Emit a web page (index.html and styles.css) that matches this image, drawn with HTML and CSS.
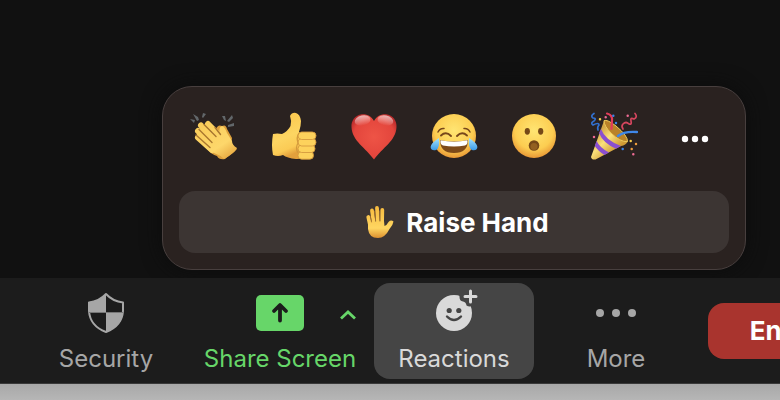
FILE: index.html
```html
<!DOCTYPE html>
<html lang="en">
<head>
<meta charset="utf-8">
<title>Meeting controls</title>
<link rel="stylesheet" href="styles.css">
</head>
<body>
<svg class="defs" aria-hidden="true">
  <defs>
    <linearGradient id="skin" x1="0" y1="0" x2="0.3" y2="1"><stop offset="0" stop-color="#fbc448"/><stop offset="0.6" stop-color="#fdd562"/><stop offset="0.85" stop-color="#fbcb55"/><stop offset="1" stop-color="#e3a03c"/></linearGradient>
    <linearGradient id="fingers" gradientUnits="userSpaceOnUse" x1="8" y1="8" x2="36" y2="48"><stop offset="0" stop-color="#f9cb58"/><stop offset="0.7" stop-color="#fdd76b"/><stop offset="1" stop-color="#e8aa42"/></linearGradient>
    <linearGradient id="palm" gradientUnits="userSpaceOnUse" x1="0" y1="0" x2="0" y2="33"><stop offset="0" stop-color="#f6b93d"/><stop offset="0.7" stop-color="#ffd661"/><stop offset="1" stop-color="#dc9030"/></linearGradient>
    <radialGradient id="face" cx="0.5" cy="0.38" r="0.66"><stop offset="0" stop-color="#ffe573"/><stop offset="0.65" stop-color="#fccd51"/><stop offset="1" stop-color="#e48d30"/></radialGradient>
    <radialGradient id="heart" cx="0.5" cy="0.5" r="0.6"><stop offset="0" stop-color="#ee5446"/><stop offset="0.75" stop-color="#e3453c"/><stop offset="1" stop-color="#b5292a"/></radialGradient>
    <linearGradient id="shine" x1="0" y1="0" x2="0" y2="1"><stop offset="0" stop-color="#fff" stop-opacity="0.65"/><stop offset="1" stop-color="#fff" stop-opacity="0"/></linearGradient>
    <linearGradient id="tear" x1="0" y1="0" x2="0" y2="1"><stop offset="0" stop-color="#a6e5ff"/><stop offset="1" stop-color="#3b9be8"/></linearGradient>
    <linearGradient id="cone" gradientUnits="userSpaceOnUse" x1="6" y1="22" x2="24" y2="40"><stop offset="0" stop-color="#d3a544"/><stop offset="0.45" stop-color="#fbe07a"/><stop offset="1" stop-color="#cf9a35"/></linearGradient>
  </defs>
</svg>

<main class="stage">
  <section class="popup" aria-label="Reactions">
    <div class="emoji-row">
      <button class="emoji" type="button" aria-label="Clap">
        <svg viewBox="0 0 48 48">
          <path fill="#62676a" d="M0 7l5 1-1 3zM3 2l5 3 1 3-2 1zM13 1l3 1-3 4-1-1zM32 4l3 0 1 5-2-1zM42 3l1 3-4 4-2-1zM44 11v3l-6 1v-2z"/>
          <path fill="#dda03c" d="M26 17Q28 12 32 14Q36 12 37 17L42 26Q41 32 43 34L47 37L35 47Q29 48 27 44Q20 42 15 34Z"/>
          <g fill="none" stroke="url(#fingers)" stroke-width="6" stroke-linecap="round">
            <path d="M18 12L33 27M11 13.500L28 31M8 19L26 36M8 25.500L22 38"/>
          </g>
          <path fill="url(#fingers)" d="M24 17L30 23Q28 15 32 14Q35 15 37 21L42 29Q42 33 47 36Q45 41 34 47Q30 43 24 41L14 33Z"/>
          <path fill="none" stroke="#a9772f" stroke-width="1.400" stroke-linecap="round" d="M14 12.500L26 24.500M9 17.500L22 30.500M6 23L20 35.500M25 15.500L30.500 22.500"/>
        </svg>
      </button>
      <button class="emoji" type="button" aria-label="Thumbs up">
        <svg viewBox="0 0 48 48">
          <path fill="url(#skin)" d="M3 22Q7 21 12 22Q18 19 20.500 14Q22 9 20 4Q22 0 26 1Q30 2 31 9Q31 14 29 20L34 29V43Q32 47.500 26 47Q17 46 13 43Q8 45 3 43Q1 33 3 22Z"/>
          <g fill="#fdd25c" stroke="#d59a3e" stroke-width="0.900">
            <rect x="28" y="39.500" width="15.500" height="7.700" rx="3.700"/>
            <rect x="28" y="33" width="17" height="7.500" rx="3.700"/>
            <rect x="28" y="26.500" width="18" height="7.500" rx="3.700"/>
            <rect x="28" y="20" width="18" height="7.500" rx="3.700"/>
          </g>
          <path fill="none" stroke="#d39a3c" stroke-width="1.200" d="M29 21Q26 25 28 31Q25 36 28 41"/>
        </svg>
      </button>
      <button class="emoji" type="button" aria-label="Heart">
        <svg viewBox="0 0 48 48">
          <path fill="url(#heart)" d="M24 9C27 3 33 2 36 2.300C43 3 47 9 46.500 15C46 29 32 36 24 47.500C16 36 2 29 1.500 15C1 9 5 3 12 2.300C15 2 21 3 24 9Z"/>
          <ellipse cx="12.500" cy="8.500" rx="8" ry="5" fill="url(#shine)" transform="rotate(-12 12.500 8)"/>
          <ellipse cx="35.500" cy="8.500" rx="8" ry="5" fill="url(#shine)" transform="rotate(12 35.500 8)"/>
        </svg>
      </button>
      <button class="emoji" type="button" aria-label="Tears of joy">
        <svg viewBox="0 0 48 48">
          <circle cx="24" cy="24" r="22" fill="url(#face)"/>
          <g fill="none" stroke="#77471b" stroke-linecap="round">
            <path stroke-width="1.500" d="M8 20Q10 16 14 16.500M40 20Q38 16 34 16.500"/>
            <path stroke-width="1.900" d="M11 23.500Q16 19 21 24M27 24Q32 19 37 23.500"/>
          </g>
          <path fill="#7d4a19" d="M10 28Q24 31 38 28Q38 41 24 41Q10 41 10 28Z"/>
          <path fill="#ffffff" d="M10.500 28.300Q24 31 37.500 28.300Q38 32.500 35 33.500Q24 35.500 13 33.500Q10 32.500 10.500 28.300Z"/>
          <path fill="url(#tear)" d="M9 26Q10 36 6 38Q1 39 .6 35Q1 31 9 26ZM39 26Q38 36 42 38Q47 39 47.400 35Q47 31 39 26Z"/>
        </svg>
      </button>
      <button class="emoji" type="button" aria-label="Surprised">
        <svg viewBox="0 0 48 48">
          <circle cx="24" cy="24" r="22" fill="url(#face)"/>
          <g fill="#754817">
            <ellipse cx="17.300" cy="19.300" rx="2.600" ry="3.400"/>
            <ellipse cx="30.700" cy="19.300" rx="2.600" ry="3.400"/>
            <ellipse cx="24" cy="33.500" rx="5.300" ry="5.300"/>
          </g>
          <ellipse cx="24" cy="34.500" rx="3.500" ry="3.500" fill="#936020"/>
        </svg>
      </button>
      <button class="emoji" type="button" aria-label="Celebrate">
        <svg viewBox="0 0 48 48">
          <path fill="url(#cone)" d="M14 8.700L37.500 29.700Q36 33 31 34L5.500 47.500Q1.500 48 1 45Z"/>
          <path fill="#8a4fd0" d="M11 17Q15 28 31 34L26 36.800Q13 31 9 21ZM6.500 29Q10 36 19 40.500L14.500 43Q8 39 4.800 34Z"/>
          <path fill="#b98229" stroke="#edcb5c" stroke-width="1" d="M14 8.700Q17 7 26 14Q38 24 37.500 29.700Q30 30 21 21Q14 14 14 8.700Z"/>
          <g fill="none" stroke-linecap="round">
            <path stroke="#e23b5a" stroke-width="2.200" d="M17 1.500Q23 3 22 9L21.500 17"/>
            <path stroke="#3f87e8" stroke-width="2.400" d="M28 24Q34 19 47 20"/>
            <path stroke="#3271d0" stroke-width="1.700" d="M4 1.500Q0 4 3 6Q7 6 4 9Q0 11 3 13Q9 10 9 13Q7 15 8 18"/>
            <path stroke="#d6465e" stroke-width="1.700" d="M45 1.500Q48 5 44 7Q40 5 41 9Q42 13 39 12Q36 9 33 12Q31 14 33 17"/>
          </g>
          <path fill="none" stroke-width="2.500" stroke-linecap="round" stroke="#f7cf4f" d="M10 7.300h0M40.700 29h0"/>
          <path fill="none" stroke-width="2.500" stroke-linecap="round" stroke="#ee6b93" d="M15.700 5.300h0M37.700 3.700h0M4 25h0M43.300 42.300h0"/>
          <path fill="none" stroke-width="2.500" stroke-linecap="round" stroke="#3c84e6" d="M23.300 3.700h0M26 11h0M32.700 37h0"/>
          <path fill="none" stroke-width="2.500" stroke-linecap="round" stroke="#ef9e3e" d="M46 32h0M41.700 37h0"/>
        </svg>
      </button>
      <button class="emoji" type="button" aria-label="More reactions">
        <svg viewBox="0 0 48 48" fill="#fff"><circle cx="15" cy="27" r="3.200"/><circle cx="25" cy="27" r="3.200"/><circle cx="35" cy="27" r="3.200"/></svg>
      </button>
    </div>
    <button class="raise" type="button">
      <svg class="hand" viewBox="0 0 28 34" aria-hidden="true">
        <path fill="none" stroke="url(#palm)" stroke-width="3.800" stroke-linecap="round" d="M2.300 12L4.500 22M6 5.500L8 20M11 3L12 20M16.300 5L16 20"/>
        <path fill="url(#palm)" d="M2 17L18 16L18.500 21Q21 20 22.500 17Q25 14.500 27.500 16.500Q27 20 23.500 24Q19 33 12 33Q3 33 2 24Z"/>
        <path fill="none" stroke="#a97029" stroke-width="0.800" stroke-linecap="round" d="M4.300 11L5.500 17M8.400 6L9.700 16M13.600 6L14 16"/>
      </svg>
      <span>Raise Hand</span>
    </button>
  </section>
</main>

<nav class="toolbar" aria-label="Meeting controls">
  <button class="tool security" type="button">
    <svg class="icon" viewBox="0 0 48 44" aria-hidden="true">
      <path fill="#1c1c1c" stroke="#a6a6a6" stroke-width="2" stroke-linejoin="round" d="M24 4Q31 11.500 41 12.500V21Q40 36 24 42Q8 36 7 21V12.500Q17 11.500 24 4Z"/>
      <path fill="#a6a6a6" d="M24 4V23H7V12.500Q17 11.500 24 4ZM24 23H41Q40 36 24 42Z"/>
      <path stroke="#777" stroke-width="1" d="M7 22.500H41"/>
    </svg>
    <span>Security</span>
  </button>
  <div class="share-group">
    <button class="tool share" type="button">
      <svg class="icon" viewBox="0 0 48 44" aria-hidden="true">
        <rect y="5" width="48" height="36" rx="5" fill="#67d669"/>
        <path fill="none" stroke="#1c1c1c" stroke-width="3.800" stroke-linecap="round" stroke-linejoin="round" d="M24 30.500V16M18 21L24 15L30 21"/>
      </svg>
      <span>Share Screen</span>
    </button>
    <button class="caret" type="button" aria-label="Share options">
      <svg viewBox="0 0 16 10"><path fill="none" stroke="#67d669" stroke-width="2.800" d="M1 8.500L8 2L15 8.500"/></svg>
    </button>
  </div>
  <button class="tool reactions" type="button" aria-expanded="true">
    <svg class="icon" viewBox="0 0 48 44" aria-hidden="true">
      <circle cx="24" cy="23" r="18" fill="#d9d9d9"/>
      <path fill="#454545" d="M29 0H48V16H42Q39 17 36.500 15.500Q36 12 33 11.500Q29.500 11 29.500 7Z"/>
      <circle cx="19.200" cy="20.500" r="2.600" fill="#454545"/><circle cx="28.800" cy="20.500" r="2.600" fill="#454545"/>
      <path fill="none" stroke="#454545" stroke-width="2.400" stroke-linecap="round" d="M17 26.500Q24 33.500 31 26.500"/>
      <path stroke="#d9d9d9" stroke-width="3" stroke-linecap="round" d="M40.500 1V12M35 6.500H46"/>
    </svg>
    <span>Reactions</span>
  </button>
  <button class="tool more" type="button">
    <svg class="icon" viewBox="0 0 48 44" fill="#a6a6a6" aria-hidden="true"><circle cx="8" cy="23" r="4"/><circle cx="24" cy="23" r="4"/><circle cx="40" cy="23" r="4"/></svg>
    <span>More</span>
  </button>
  <button class="end" type="button">End</button>
</nav>
<footer class="desk"></footer>
</body>
</html>
```

FILE: styles.css
```css
* {
  box-sizing: border-box;
}

body {
  margin: 0;
  min-height: 100vh;
  display: flex;
  flex-direction: column;
  overflow: hidden;
  background: #111;
  font-family: Inter, "Liberation Sans", sans-serif;
}

button {
  margin: 0;
  padding: 0;
  border: 0;
  background: none;
  color: inherit;
  font: inherit;
}

svg {
  display: block;
}

.defs {
  position: absolute;
  width: 0;
  height: 0;
}

.stage {
  flex: 1;
  display: flex;
  flex-direction: column;
  justify-content: flex-end;
  padding: 0 34px 8px 162px;
}

.popup {
  display: flex;
  flex-direction: column;
  gap: 31px;
  padding: 25px 16px 16px;
  border: 1px solid #483f3e;
  border-radius: 30px;
  background: #2a2220;
  box-shadow: 0 0 20px #0c0c0c;
}

.emoji-row {
  display: flex;
  gap: 32px;
  padding: 0 11px;
}

.emoji {
  flex: none;
  width: 48px;
  height: 48px;
}

.emoji svg {
  width: 48px;
  height: 48px;
}

.raise {
  display: flex;
  align-items: center;
  justify-content: center;
  gap: 12px;
  height: 62px;
  padding-left: 7px;
  border-radius: 16px;
  background: #3c3533;
  color: #fff;
  font-size: 26px;
  font-weight: 700;
}

.hand {
  width: 28px;
  height: 34px;
}

.toolbar {
  display: flex;
  align-items: center;
  height: 106px;
  padding-left: 26px;
  border-bottom: 1px solid #393939;
  background: #1c1c1c;
  color: #a6a6a6;
  font-size: 24px;
  white-space: nowrap;
}

.tool {
  flex: none;
  display: flex;
  flex-direction: column;
  align-items: center;
  gap: 10px;
  width: 160px;
  height: 96px;
  padding-top: 7px;
  line-height: 30px;
}

.icon {
  width: 48px;
  height: 44px;
  overflow: visible;
}

.share-group {
  position: relative;
  flex: none;
}

.share {
  width: 188px;
  color: #67d669;
}

.caret {
  position: absolute;
  top: 27px;
  right: 18px;
}

.caret svg {
  width: 16px;
  height: 10px;
}

.reactions {
  border-radius: 16px;
  background: #454545;
  color: #d9d9d9;
}

.more {
  width: 164px;
}

.end {
  flex: none;
  width: 132px;
  height: 56px;
  margin-left: 10px;
  border-radius: 16px;
  background: #a9342e;
  color: #fff;
  font-size: 26px;
  font-weight: 700;
}

.desk {
  height: 16px;
  background: linear-gradient(#a8a8a8, #b6b6b6);
}
```
